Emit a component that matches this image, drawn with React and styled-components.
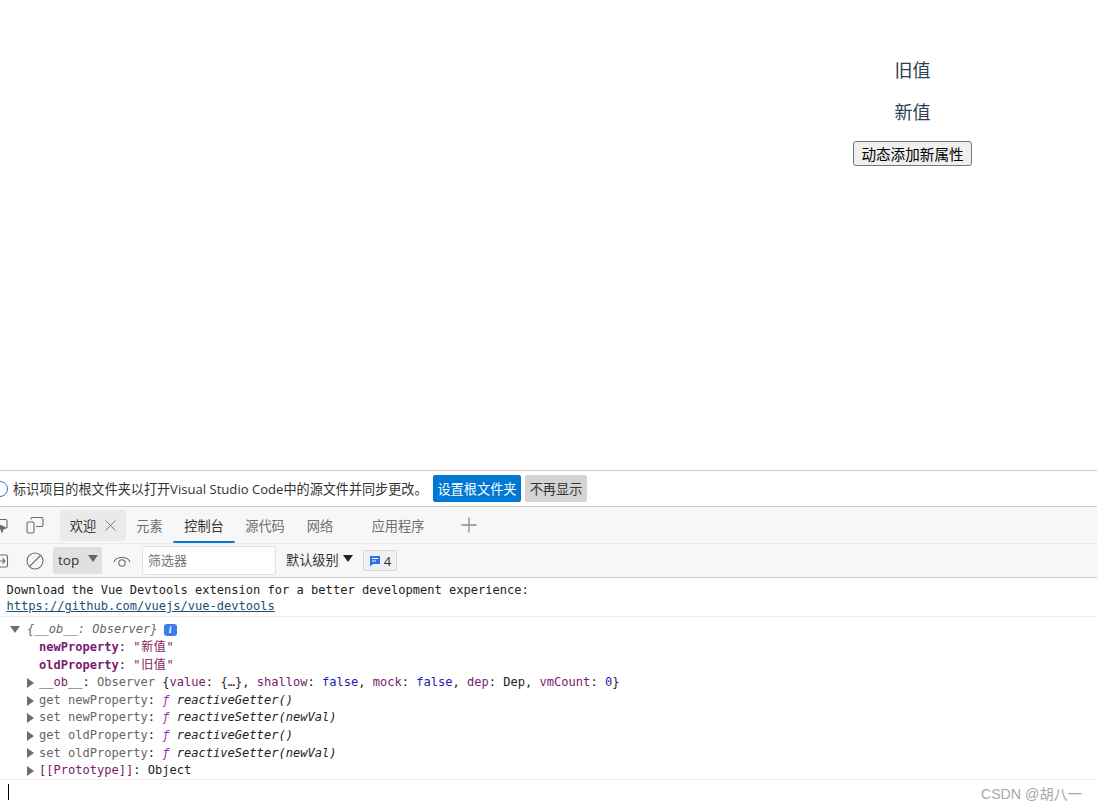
import React from "react";
import styled, { createGlobalStyle } from "styled-components";

const Global = createGlobalStyle`
  html, body { margin: 0; padding: 0; background: #fff; }
  #root { width: 1097px; height: 811px; overflow: hidden; }
`;
const UI = `"Open Sans", "Noto Sans CJK SC", sans-serif`;
const MONO = `"DejaVu Sans Mono", "Noto Sans CJK SC", monospace`;

const Page = styled.div`
  width: 1097px; height: 811px; display: flex; flex-direction: column; overflow: hidden; position: relative;
`;
const Preview = styled.div`
  height: 470px; box-sizing: border-box; padding: 57px 0 0 728px;
  display: flex; flex-direction: column; align-items: center;
  font-family: "Liberation Sans", "Noto Sans CJK SC", sans-serif; color: #2c3e50; font-size: 18px;
`;
const Para = styled.p`
  margin: 0 0 18px; height: 24px; line-height: 28px; white-space: nowrap;
`;
const DemoButton = styled.button`
  width: 119px; height: 25px; margin-top: 0; padding: 0; box-sizing: border-box; font-family: "Noto Sans CJK SC", sans-serif; font-size: 14.6px; line-height: 20px;
  color: #000; background: #efefef; border: 1px solid #767676; border-radius: 3px;
`;
const Devtools = styled.div`
  flex: 1; display: flex; flex-direction: column; font-family: ${UI}; font-size: 13.2px; color: #333;
`;
const InfoBar = styled.div`
  height: 37px; box-sizing: border-box; border-top: 1px solid #ccc; border-bottom: 1px solid #ccc;
  display: flex; align-items: center; margin-left: -8px; padding-left: 8px; gap: 0;
`;
const InfoIcon = styled.span`
  width: 14px; height: 14px; border: 1.5px solid #3478d4; border-radius: 50%; margin-left: -8px; margin-right: 5px; flex: none;
`;
const InfoText = styled.span`
  width: 420px; white-space: nowrap; font-size: 13.1px;
`;
const InfoBtn = styled.span`
  height: 27px; display: flex; align-items: center; justify-content: center; border-radius: 2px;
  width: ${p => p.$w}px; margin-right: 4px; font-size: 13.2px;
  background: ${p => (p.$primary ? "#0078d4" : "#d4d4d4")}; color: ${p => (p.$primary ? "#fff" : "#333")};
`;
const TabBar = styled.div`
  height: 36px; box-sizing: border-box; background: #f7f7f7; display: flex; align-items: center; position: relative; overflow: hidden;
`;
const IconSlot = styled.span`
  display: flex; align-items: center; justify-content: center; flex: none; width: ${p => p.$w}px; margin-left: ${p => p.$ml || 0}px; color: #6b6b6b;
`;
const Tab = styled.div`
  box-sizing: border-box; display: flex; align-items: center; justify-content: center; gap: 9px; flex: none;
  width: ${p => p.$w}px; margin-left: ${p => p.$ml || 0}px; color: ${p => (p.$dark ? "#333" : "#6e6e6e")};
  background: ${p => (p.$fill ? "#eaeaea" : "transparent")}; border-radius: 2px;
  border-bottom: ${p => (p.$active ? "2px solid #0078d4" : "none")};
  margin-top: ${p => (p.$active ? "3px" : "0")}; height: ${p => (p.$active ? "33px" : "31px")};
`;
const Toolbar = styled.div`
  height: 35px; box-sizing: border-box; background: #f7f7f7; border-top: 1px solid #e8e8e8; border-bottom: 1px solid #ccc;
  display: flex; align-items: center;
`;
const TopSelect = styled.div`
  width: 49px; height: 27px; margin-left: 9px; box-sizing: border-box; background: #e0e0e0; border-radius: 2px; padding: 0 4px 2px 5px;
  display: flex; align-items: center; justify-content: space-between; font-size: 13.5px; color: #333;
`;
const Caret = styled.span`
  width: 0; height: 0; border-left: 5px solid transparent; border-right: 5px solid transparent; border-top: 7px solid ${p => p.$c || "#555"}; flex: none; margin-top: ${p => p.$mt || 0}px;
`;
const Filter = styled.div`
  width: 134px; height: 29px; margin-left: 11px; box-sizing: border-box; background: #fff; border: 1px solid #e0e0e0; border-radius: 3px; padding: 0 0 2px 5px;
  display: flex; align-items: center; color: #777; font-size: 13px;
`;
const Level = styled.div`
  display: flex; align-items: center; gap: 4px; margin-left: 10px; padding-bottom: 2px; color: #333; font-size: 13.2px; width: 67px; white-space: nowrap;
`;
const Issues = styled.div`
  width: 34px; height: 21px; margin-left: 10px; box-sizing: border-box; background: #eef0f4; border: 1px solid #d5d5d5; border-radius: 2px;
  display: flex; align-items: center; justify-content: center; gap: 3px; font-size: 13px; color: #333;
`;
const Console = styled.div`
  flex: 1; position: relative; font-family: ${MONO}; font-size: 12.05px; color: #222; display: flex; flex-direction: column;
`;
const Message = styled.div`
  height: 39px; box-sizing: border-box; padding: 4px 0 0 6.5px; line-height: 16px; border-bottom: 1px solid #eee; white-space: pre;
`;
const Link = styled.span`
  display: block; color: #1a4f78; text-decoration: underline;
`;
const ObjectBlock = styled.div`
  height: 163px; box-sizing: border-box; padding-top: 4px; border-bottom: 1px solid #eee;
`;
const Row = styled.div`
  height: ${p => (p.$h || 17.6)}px; line-height: 17.6px; white-space: pre; display: flex; align-items: center; padding-left: ${p => p.$indent}px;
`;
const Arrow = styled.span`
  width: 0; height: 0; flex: none; margin-right: ${p => p.$mr}px;
  ${p => p.$open
    ? "border-left: 5px solid transparent; border-right: 5px solid transparent; border-top: 7px solid #6e6e6e;"
    : "border-top: 5px solid transparent; border-bottom: 5px solid transparent; border-left: 7px solid #6e6e6e;"}
`;
const Italic = styled.span` font-style: italic; color: ${p => p.$c || "#666"}; `;
const Key = styled.b` color: #7a1a6e; font-weight: 700; `;
const Str = styled.span` color: #8a1a5b; letter-spacing: 0.6px; `;
const Dim = styled.span` color: #666; `;
const Prop = styled.span` color: #7a1a6e; `;
const Num = styled.span` color: #1c1cb0; `;
const Fn = styled.span` color: #a030c0; font-style: italic; `;
const Badge = styled.span`
  width: 13px; height: 12px; margin-left: 6px; border-radius: 3px; background: #3a7ce8; color: #fff; font-size: 10px; font-weight: 700; font-style: italic;
  display: inline-flex; align-items: center; justify-content: center; font-family: "Liberation Serif", serif;
`;
const Prompt = styled.div`
  height: 20px; padding-left: 8px; padding-top: 4px; box-sizing: border-box;
`;
const PromptCaret = styled.div` width: 1px; height: 16px; background: #000; `;
const Watermark = styled.div`
  position: absolute; right: 15px; bottom: 8px; font-family: "Liberation Sans", "Noto Sans CJK SC", sans-serif; font-size: 14.2px; color: #a8a8a8;
`;

const Stroke = ({ w = 18, h = 18, children }) => (
  <svg width={w} height={h} viewBox={`0 0 ${w} ${h}`} fill="none" stroke="currentColor" strokeWidth="1.1">{children}</svg>
);

const Getter = ({ prefix, name, fn }) => (
  <Row $indent={27}>
    <Arrow $mr={5} />
    <Dim>{prefix} {name}</Dim>: <Fn>ƒ </Fn><Italic $c="#222">{fn}</Italic>
  </Row>
);

export default function App() {
  return (
    <Page>
      <Global />
      <Preview>
        <Para>旧值</Para>
        <Para>新值</Para>
        <DemoButton>动态添加新属性</DemoButton>
      </Preview>
      <Devtools>
        <InfoBar>
          <InfoIcon />
          <InfoText>标识项目的根文件夹以打开Visual Studio Code中的源文件并同步更改。</InfoText>
          <InfoBtn $primary $w={88}>设置根文件夹</InfoBtn>
          <InfoBtn $w={62}>不再显示</InfoBtn>
        </InfoBar>
        <TabBar>
          <IconSlot $w={18} $ml={-9}>
            <Stroke><path d="M2 3.5h12.5a1.5 1.5 0 0 1 1.5 1.5v7M6 14H3.5A1.5 1.5 0 0 1 2 12.5V5" /><path d="M8 9l7 3-3 1-1 3z" fill="currentColor" /></Stroke>
          </IconSlot>
          <IconSlot $w={18} $ml={17}>
            <Stroke><rect x="1" y="6" width="7" height="11" rx="1.5" /><path d="M5 3.5V3a1.5 1.5 0 0 1 1.5-1.5H15.5A1.5 1.5 0 0 1 17 3v6a1.5 1.5 0 0 1-1.5 1.5H10" /></Stroke>
          </IconSlot>
          <Tab $w={66} $ml={16} $fill $dark>
            欢迎
            <svg width="11" height="11" viewBox="0 0 11 11" stroke="#777" strokeWidth="1"><path d="M0.5 0.5l10 10M10.5 0.5l-10 10" /></svg>
          </Tab>
          <Tab $w={47}>元素</Tab>
          <Tab $w={62} $active $dark>控制台</Tab>
          <Tab $w={60}>源代码</Tab>
          <Tab $w={48} $ml={1}>网络</Tab>
          <Tab $w={80} $ml={14}>应用程序</Tab>
          <IconSlot $w={16} $ml={23}>
            <svg width="16" height="16" viewBox="0 0 16 16" stroke="#8a8a8a" strokeWidth="1.3"><path d="M8 0.5v15M0.5 8h15" /></svg>
          </IconSlot>
        </TabBar>
        <Toolbar>
          <IconSlot $w={18} $ml={-9}>
            <Stroke><path d="M2 3h13a1.5 1.5 0 0 1 1.5 1.5v9A1.5 1.5 0 0 1 15 15H2" /><path d="M8 9h6M11.5 6.5L14 9l-2.5 2.5" /></Stroke>
          </IconSlot>
          <IconSlot $w={18} $ml={17}>
            <Stroke><circle cx="9" cy="9" r="8" /><path d="M3.5 14.5l11-11" /></Stroke>
          </IconSlot>
          <TopSelect>top<Caret $c="#666" $mt={-3} /></TopSelect>
          <IconSlot $w={18} $ml={11}>
            <Stroke h={14}><path d="M1 8c2-6 14-6 16 0" /><circle cx="9" cy="9" r="3.2" /></Stroke>
          </IconSlot>
          <Filter>筛选器</Filter>
          <Level>默认级别<Caret $c="#222" $mt={-2} /></Level>
          <Issues>
            <svg width="12" height="12" viewBox="0 0 12 12"><path d="M1 1h10v8H4l-3 2.5z" fill="#2a72e8" /><path d="M3 3.5h6M3 6h4" stroke="#fff" strokeWidth="1" /></svg>
            4
          </Issues>
        </Toolbar>
        <Console>
          <Message>
            Download the Vue Devtools extension for a better development experience:
            <Link>https://github.com/vuejs/vue-devtools</Link>
          </Message>
          <ObjectBlock>
            <Row $indent={10}><Arrow $open $mr={7} /><Italic>{"{__ob__: Observer}"}</Italic><Badge>i</Badge></Row>
            <Row $indent={39} $h={18}><Key>newProperty</Key>: <Str>"新值"</Str></Row>
            <Row $indent={39}><Key>oldProperty</Key>: <Str>"旧值"</Str></Row>
            <Row $indent={27}>
              <Arrow $mr={5} />
              <Prop>__ob__</Prop>: <Dim>Observer </Dim>{"{"}<Prop>value</Prop>: {"{…}"}, <Prop>shallow</Prop>: <Num>false</Num>, <Prop>mock</Prop>: <Num>false</Num>, <Prop>dep</Prop>: Dep, <Prop>vmCount</Prop>: <Num>0</Num>{"}"}
            </Row>
            <Getter prefix="get" name="newProperty" fn="reactiveGetter()" />
            <Getter prefix="set" name="newProperty" fn="reactiveSetter(newVal)" />
            <Getter prefix="get" name="oldProperty" fn="reactiveGetter()" />
            <Getter prefix="set" name="oldProperty" fn="reactiveSetter(newVal)" />
            <Row $indent={27}><Arrow $mr={5} /><Prop>[[Prototype]]</Prop>: Object</Row>
          </ObjectBlock>
          <Prompt><PromptCaret /></Prompt>
        </Console>
      </Devtools>
      <Watermark>CSDN @胡八一</Watermark>
    </Page>
  );
}
